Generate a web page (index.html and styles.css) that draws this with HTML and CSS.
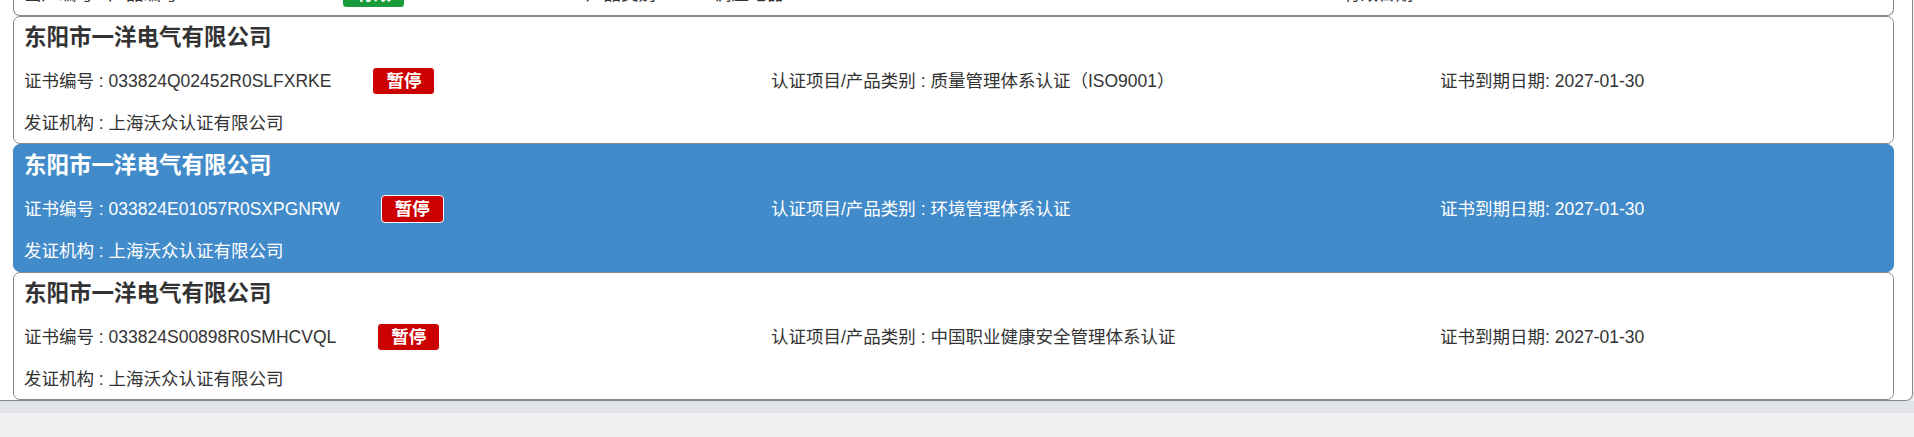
FILE: index.html
```html
<!DOCTYPE html>
<html lang="zh-CN">
<head>
    <meta charset="UTF-8">
    <meta name="viewport" content="width=device-width, initial-scale=1.0">
    <title>证书查询结果</title>
    <link rel="stylesheet" href="styles.css">
</head>
<body>
    <div class="page">
        <div class="list">
            <!-- previous result, scrolled mostly out of view -->
            <div class="card card-cut">
                <div class="row row-product">
                    <span>出厂编号 : 产品编号 2</span>
                    <span class="tag tag-ok">有效</span>
                    <span>产品类别</span>
                    <span>调压电器</span>
                    <span>有效日期</span>
                </div>
            </div>

            <div class="card">
                <h3 class="title">东阳市一洋电气有限公司</h3>
                <div class="row">
                    <div class="cell">
                        <span>证书编号 : 033824Q02452R0SLFXRKE</span>
                        <span class="tag">暂停</span>
                    </div>
                    <div class="cell">认证项目/产品类别 : 质量管理体系认证（ISO9001）</div>
                    <div class="cell">证书到期日期: 2027-01-30</div>
                </div>
                <div class="issuer">发证机构 : 上海沃众认证有限公司</div>
            </div>

            <div class="card active">
                <h3 class="title">东阳市一洋电气有限公司</h3>
                <div class="row">
                    <div class="cell">
                        <span>证书编号 : 033824E01057R0SXPGNRW</span>
                        <span class="tag">暂停</span>
                    </div>
                    <div class="cell">认证项目/产品类别 : 环境管理体系认证</div>
                    <div class="cell">证书到期日期: 2027-01-30</div>
                </div>
                <div class="issuer">发证机构 : 上海沃众认证有限公司</div>
            </div>

            <div class="card">
                <h3 class="title">东阳市一洋电气有限公司</h3>
                <div class="row">
                    <div class="cell">
                        <span>证书编号 : 033824S00898R0SMHCVQL</span>
                        <span class="tag">暂停</span>
                    </div>
                    <div class="cell">认证项目/产品类别 : 中国职业健康安全管理体系认证</div>
                    <div class="cell">证书到期日期: 2027-01-30</div>
                </div>
                <div class="issuer">发证机构 : 上海沃众认证有限公司</div>
            </div>
        </div>
    </div>
    <div class="band"></div>
</body>
</html>
```

FILE: styles.css
```css
body {
    margin: 0;
    background-color: #f0f0f0;
    color: #333;
    font-family: "Liberation Sans", Arial, "Noto Sans CJK SC", sans-serif;
    font-size: 17.5px;
}

.page {
    margin-right: 1px;
    padding: 0 18px 0 13px;
    background-color: white;
    border-right: 1px solid #888;
    border-bottom: 1px solid #888;
    border-bottom-right-radius: 7px;
    overflow: hidden;
}

.card {
    padding: 6px 10px 8px 10px;
    border: 1px solid #888;
    border-radius: 7px;
    background-color: white;
}

.card-cut {
    margin-top: -20px;
    padding-top: 0;
    padding-bottom: 9px;
    border-top: none;
    border-top-left-radius: 0;
    border-top-right-radius: 0;
}

.active {
    background-color: #428bca;
    border-color: #428bca;
    color: white;
}

.title {
    margin: 0;
    font-size: 22.5px;
    font-weight: bold;
    line-height: 30px;
}

.row {
    display: grid;
    grid-template-columns: 747px 669px 1fr;
    align-items: center;
    margin-top: 14px;
    height: 26px;
    line-height: 26px;
}

.row-product {
    grid-template-columns: 318px 244px 128px 629px 1fr;
    margin-top: 0;
}

.cell {
    display: flex;
    align-items: center;
}

.tag {
    display: inline-block;
    margin-left: 41px;
    padding: 0 13px;
    height: 26px;
    line-height: 26px;
    border: 1px solid white;
    border-radius: 4px;
    background-color: #cc0000;
    color: white;
    font-weight: bold;
}

.tag-ok {
    justify-self: start;
    margin-left: 0;
    background-color: #199b3b;
}

.issuer {
    margin-top: 18px;
    line-height: 24px;
}

.band {
    height: 12px;
    background-color: #e1e5e9;
}
```
